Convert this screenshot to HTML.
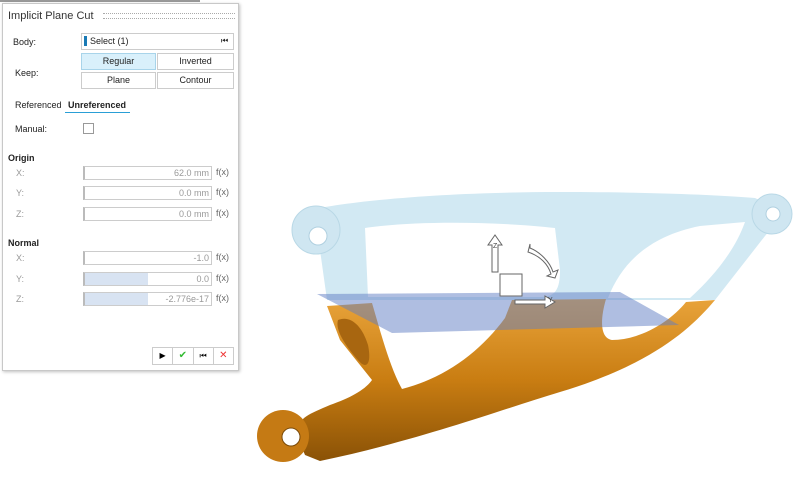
<!DOCTYPE html>
<html><head><style>
body{margin:0;width:800px;height:493px;background:#fff;position:relative;overflow:hidden;font-family:"Liberation Sans",sans-serif;}
.abs{position:absolute}
#panel{position:absolute;left:2px;top:3px;width:235px;height:366px;border:1px solid #c8c8c8;background:#fff;box-shadow:1px 1px 3px rgba(0,0,0,.25);}
.t{position:absolute;font-size:9px;color:#222;white-space:nowrap}
.g{color:#999}
.btn{position:absolute;height:15px;border:1px solid #ccc;background:#fff;font-size:9px;text-align:center;line-height:15px;color:#222;}
.fld{position:absolute;left:80px;width:124px;height:12px;border:1px solid #ccc;border-left:2px solid #bbb;font-size:9px;color:#999;text-align:right;line-height:12px;padding-right:2px;box-sizing:content-box;}
.fx{position:absolute;left:213px;font-size:9px;color:#666;}
</style></head><body>
<div class="abs" style="left:0;top:0;width:200px;height:2px;background:#999"></div>
<div id="panel">
<div class="t" style="left:5px;top:6px;font-size:11px;color:#333">Implicit Plane Cut</div>
<div class="abs" style="left:100px;top:9px;width:132px;height:4px;border-top:1px dotted #aaa;border-bottom:1px dotted #aaa"></div>
<div class="t" style="left:10px;top:33px">Body:</div>
<div class="abs" style="left:78px;top:29px;width:151px;height:15px;border:1px solid #ccc"></div>
<div class="abs" style="left:81px;top:32px;width:3px;height:10px;background:#1a7ab5"></div>
<div class="t" style="left:87px;top:32px">Select (1)</div>
<div class="t" style="left:218px;top:32px;font-size:8px">⏮</div>
<div class="t" style="left:12px;top:64px">Keep:</div>
<div class="btn" style="left:78px;top:49px;width:73px;background:#d9f0fb;border-color:#a8d4ea">Regular</div>
<div class="btn" style="left:154px;top:49px;width:75px">Inverted</div>
<div class="btn" style="left:78px;top:68px;width:73px">Plane</div>
<div class="btn" style="left:154px;top:68px;width:75px">Contour</div>
<div class="t" style="left:12px;top:96px">Referenced</div>
<div class="t" style="left:65px;top:96px;font-weight:bold">Unreferenced</div>
<div class="abs" style="left:62px;top:108px;width:65px;height:1px;background:#2a9fd6"></div>
<div class="t" style="left:12px;top:120px">Manual:</div>
<div class="abs" style="left:80px;top:119px;width:9px;height:9px;border:1px solid #999"></div>
<div class="t" style="left:5px;top:149px;font-weight:bold">Origin</div>
<div class="t g" style="left:13px;top:164px">X:</div><div class="fld" style="top:162px">62.0 mm</div><div class="fx" style="top:163px">f(x)</div>
<div class="t g" style="left:13px;top:184px">Y:</div><div class="fld" style="top:182px">0.0 mm</div><div class="fx" style="top:183px">f(x)</div>
<div class="t g" style="left:13px;top:205px">Z:</div><div class="fld" style="top:203px">0.0 mm</div><div class="fx" style="top:204px">f(x)</div>
<div class="t" style="left:5px;top:234px;font-weight:bold">Normal</div>
<div class="t g" style="left:13px;top:249px">X:</div><div class="fld" style="top:247px">-1.0</div><div class="fx" style="top:248px">f(x)</div>
<div class="t g" style="left:13px;top:270px">Y:</div><div class="fld" style="top:268px;background:linear-gradient(90deg,#d8e3f2 0,#d8e3f2 50%,#fff 50%)">0.0</div><div class="fx" style="top:269px">f(x)</div>
<div class="t g" style="left:13px;top:290px">Z:</div><div class="fld" style="top:288px;background:linear-gradient(90deg,#d8e3f2 0,#d8e3f2 50%,#fff 50%)">-2.776e-17</div><div class="fx" style="top:289px">f(x)</div>
<div class="abs" style="left:149px;top:343px;width:80px;height:16px;border:1px solid #ccc;display:flex">
<div style="flex:1;border-right:1px solid #ccc;font-size:8px;text-align:center;line-height:16px">▶</div>
<div style="flex:1;border-right:1px solid #ccc;font-size:10px;text-align:center;line-height:16px;color:#3b3">✔</div>
<div style="flex:1;border-right:1px solid #ccc;font-size:8px;text-align:center;line-height:16px">⏮</div>
<div style="flex:1;font-size:10px;text-align:center;line-height:16px;color:#e33">✕</div>
</div>
</div>
<svg class="abs" style="left:0;top:0" width="800" height="493">
<defs>
<linearGradient id="or" x1="0" y1="0" x2="0" y2="1"><stop offset="0" stop-color="#e8a33a"/><stop offset="0.5" stop-color="#c97d12"/><stop offset="1" stop-color="#8a5206"/></linearGradient>
</defs>
<path d="M300,212 C350,200 450,192 560,192 C650,192 720,195 755,198 L785,212 L765,236 L715,300 L327,300 L320,250 Z" fill="#d2e9f3"/>
<path d="M365,228 C420,220 500,222 555,228 L560,270 C560,290 555,297 540,297 L368,297 Z" fill="#fff"/>
<path d="M608,298 C622,262 650,236 700,226 L745,222 C735,250 715,275 690,298 Z" fill="#fff"/>
<circle cx="316" cy="230" r="24" fill="#cfe6f1" stroke="#b9d8e6"/><circle cx="318" cy="236" r="9" fill="#fff" stroke="#b0d0e0"/>
<circle cx="772" cy="214" r="20" fill="#cfe6f1" stroke="#b9d8e6"/><circle cx="773" cy="214" r="7" fill="#fff" stroke="#b0d0e0"/>
<path d="M327,306 L372,303 C380,330 390,368 402,389 C445,378 480,352 505,318 L512,300 L606,299 C600,320 600,338 612,340 C640,340 670,322 686,302 L715,300 C690,330 650,365 560,392 C500,410 420,440 320,461 L305,455 C290,420 300,418 330,405 C350,398 365,390 372,380 L340,340 Z" fill="url(#or)"/>
<path d="M338,320 C350,315 362,325 368,345 C372,365 366,370 358,360 C345,345 335,330 338,320 Z" fill="#a86610"/>
<circle cx="283" cy="436" r="26" fill="#c57a14"/><circle cx="291" cy="437" r="9" fill="#fff" stroke="#7a4a08"/>
<polygon points="317,294 620,292 679,325 392,333" fill="rgba(95,125,195,0.5)"/>
<g stroke="#666" stroke-width="1" fill="#fff">
<path d="M492,272 L492,245 L488,245 L495,235 L502,245 L498,245 L498,272 Z"/>
<rect x="500" y="274" width="22" height="22"/>
<path d="M515,300 L545,300 L545,296 L555,302 L545,308 L545,304 L515,304 Z"/>
<path d="M530,248 C540,252 550,262 553,272 L558,270 L555,278 L547,276 L551,274 C548,264 540,256 528,252 L530,244 Z"/>
</g>
<text x="493" y="248" font-size="7" fill="#444" font-family="Liberation Sans">Z</text>
<text x="548" y="302" font-size="7" fill="#444" font-family="Liberation Sans">Y</text>
</svg>
</body></html>
